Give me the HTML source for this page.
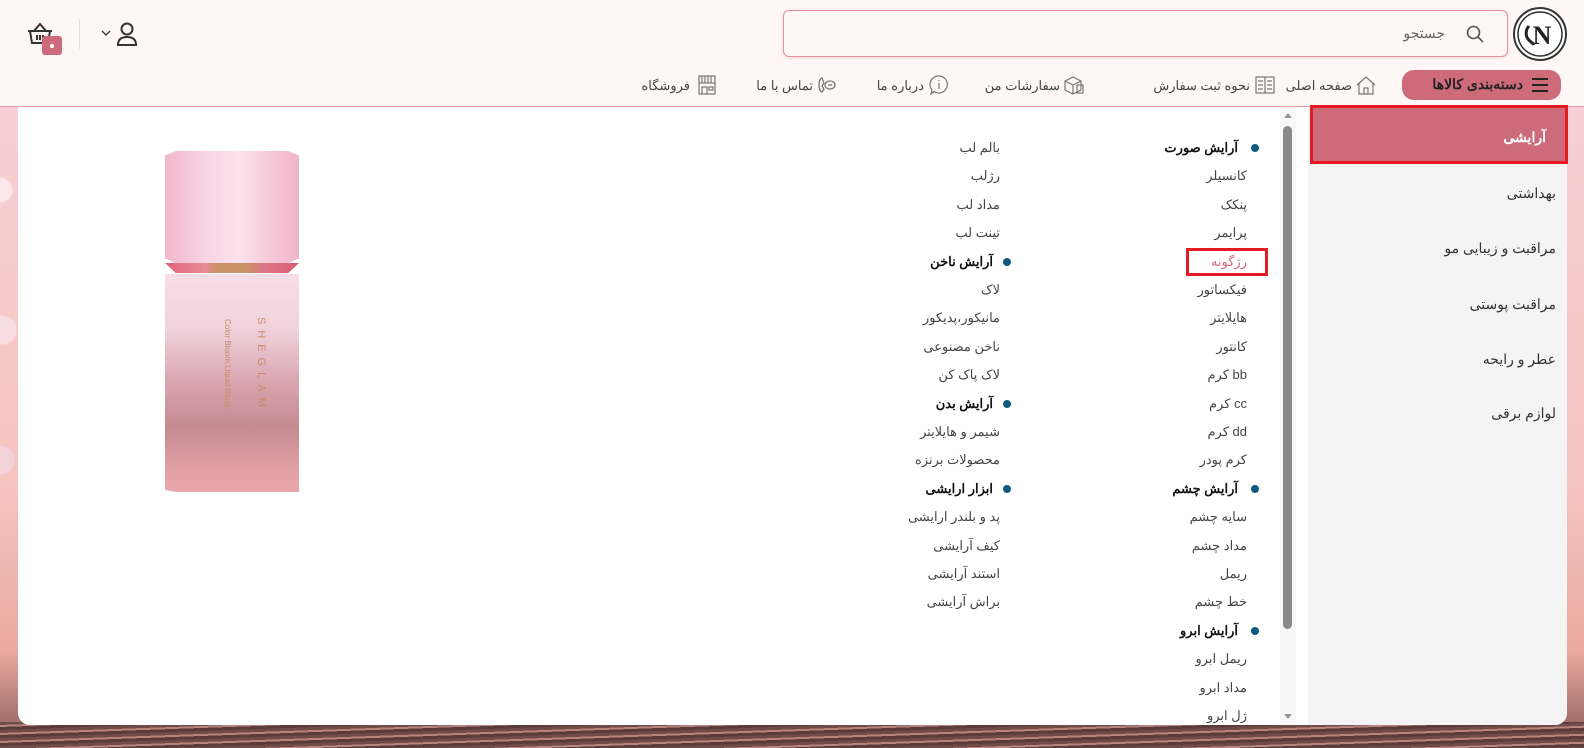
<!DOCTYPE html>
<html lang="fa"><head><meta charset="utf-8">
<style>
*{margin:0;padding:0;box-sizing:border-box}
body{width:1584px;height:748px;overflow:hidden;position:relative;font-family:"Liberation Sans","Noto Sans CJK SC",sans-serif;background:#f3c4c3}
.bg{position:absolute;left:0;top:107px;width:1584px;height:641px;background:linear-gradient(180deg,#f6d0d4 0%,#f5c3c0 60%,#e8a9a0 85%,#8a5a58 100%)}
.sea{position:absolute;left:0;top:722px;width:1584px;height:26px;background:repeating-linear-gradient(178deg,#6f4b49 0 3px,#b9847e 3px 5px,#5a3c3b 5px 8px)}
.header{position:absolute;left:0;top:0;width:1584px;height:107px;background:#fff6f6;border-bottom:1px solid #e39aa2}
.search{position:absolute;left:783px;top:10px;width:725px;height:47px;border:1px solid #e3939d;border-radius:6px;background:#fff6f6;box-shadow:0 1px 3px rgba(220,120,130,.25)}
.search span{position:absolute;right:62px;top:14px;font-size:14px;color:#666}
.catbtn{position:absolute;left:1402px;top:70px;width:159px;height:30px;border-radius:12px;background:#cd6b7a;color:#222;font-size:14px;font-weight:bold}
.nav{position:absolute;top:78px;font-size:13px;color:#444;white-space:nowrap}
.panel{position:absolute;left:18px;top:107px;width:1549px;height:618px;background:#fff;border-radius:0 0 12px 12px;overflow:hidden}
.grey{position:absolute;left:1290px;top:0;width:259px;height:618px;background:#f4f4f4}
.sb{position:absolute;left:1262px;top:0;width:16px;height:618px;background:#f7f7f7}
.thumb{position:absolute;left:3px;top:19px;width:9px;height:503px;background:#8a8a8a;border-radius:5px}
.it{position:absolute;font-size:13px;color:#444;white-space:nowrap;direction:rtl;line-height:16px}
.h{font-weight:bold;color:#111}
.dot{position:absolute;width:8px;height:8px;border-radius:50%;background:#0d5a7c}
.side{position:absolute;font-size:14px;color:#333;direction:rtl;white-space:nowrap}
</style></head><body>
<div class="bg"></div>
<div class="sea"></div>
<div style="position:absolute;left:0;top:130px;width:18px;height:380px;background:radial-gradient(circle at 0 60px,#fbe6ea 0 12px,transparent 13px),radial-gradient(circle at 2px 200px,#f7dde2 0 14px,transparent 15px),radial-gradient(circle at 0 330px,#f3d3d9 0 14px,transparent 15px)"></div>

<div class="header">
  <div class="search"><span>جستجو</span>
    <svg style="position:absolute;right:22px;top:13px" width="20" height="20" viewBox="0 0 20 20" fill="none" stroke="#555" stroke-width="1.6"><circle cx="8.5" cy="8.5" r="6"/><path d="M13 13l5 5"/></svg>
  </div>
  <svg style="position:absolute;left:1512px;top:6px" width="56" height="56" viewBox="0 0 56 56"><circle cx="28" cy="28" r="26" fill="#fff" stroke="#333" stroke-width="2"/><circle cx="28" cy="28" r="22" fill="none" stroke="#333" stroke-width="1.5"/><path d="M17 20c-3 3-4 9-1 13 2 3 5 4 6 6" fill="none" stroke="#222" stroke-width="3"/><text x="30" y="38" font-family="Liberation Serif,serif" font-size="26" font-weight="bold" text-anchor="middle" fill="#222">N</text></svg>
  <svg style="position:absolute;left:26px;top:21px" width="28" height="26" viewBox="0 0 28 26" fill="none" stroke="#333" stroke-width="2"><path d="M8 10L14 3l6 7"/><path d="M2 10h24"/><path d="M4 10l2 12h16l2-12"/><path d="M11 14v5M14 14v5M17 14v5"/></svg>
  <div style="position:absolute;left:42px;top:36px;width:20px;height:19px;background:#cd6b7a;border-radius:3px"><div style="position:absolute;left:8px;top:8px;width:4px;height:4px;border-radius:50%;background:#fff"></div></div>
  <div style="position:absolute;left:79px;top:19px;width:1px;height:30px;background:#e5dede"></div>
  <svg style="position:absolute;left:101px;top:29px" width="10" height="8" viewBox="0 0 10 8" fill="none" stroke="#333" stroke-width="1.3"><path d="M1 2l4 4 4-4"/></svg>
  <svg style="position:absolute;left:116px;top:22px" width="22" height="24" viewBox="0 0 22 24" fill="none" stroke="#333" stroke-width="2"><circle cx="11" cy="7" r="5.5"/><path d="M2 23c0-6 4-8 9-8s9 2 9 8z"/></svg>

  <div class="catbtn"><span style="position:absolute;right:38px;top:6px">دسته‌بندی کالاها</span>
    <svg style="position:absolute;right:12px;top:7px" width="18" height="16" viewBox="0 0 18 16" stroke="#222" stroke-width="2"><path d="M1 2h16M1 8h16M1 14h16"/></svg></div>
  <div class="nav" style="right:232px">صفحه اصلی</div>
  <svg style="position:absolute;left:1355px;top:75px" width="22" height="20" viewBox="0 0 22 20" fill="none" stroke="#777" stroke-width="1.2"><path d="M2 10L11 2l9 8M4 8v11h14V8M9 19v-6h4v6"/></svg>
  <div class="nav" style="right:334px">نحوه ثبت سفارش</div>
  <svg style="position:absolute;left:1255px;top:76px" width="20" height="18" viewBox="0 0 20 18" fill="none" stroke="#777" stroke-width="1.2"><rect x="1" y="1" width="18" height="16"/><path d="M10 1v16M3 5h5M3 9h5M3 13h5M12 5h5M12 9h5M12 13h5"/></svg>
  <div class="nav" style="right:524px">سفارشات من</div>
  <svg style="position:absolute;left:1063px;top:75px" width="22" height="20" viewBox="0 0 22 20" fill="none" stroke="#777" stroke-width="1.2"><path d="M2 6l8-4 8 4v9l-8 4-8-4zM2 6l8 4 8-4M10 10v9"/><rect x="14" y="10" width="6" height="8"/></svg>
  <div class="nav" style="right:660px">درباره ما</div>
  <svg style="position:absolute;left:929px;top:75px" width="20" height="20" viewBox="0 0 20 20" fill="none" stroke="#777" stroke-width="1.2"><path d="M10 1a8.5 8.5 0 1 1-5 15.5L2 19l1-4A8.5 8.5 0 0 1 10 1z"/><path d="M10 8v6M10 5v1"/></svg>
  <div class="nav" style="right:771px">تماس با ما</div>
  <svg style="position:absolute;left:816px;top:76px" width="20" height="18" viewBox="0 0 20 18" fill="none" stroke="#777" stroke-width="1.3"><path d="M6 2C2 3 2 15 6 16l2-3-2-3 2-3z"/><ellipse cx="14" cy="9" rx="5" ry="4"/><path d="M12 9h4"/></svg>
  <div class="nav" style="right:894px">فروشگاه</div>
  <svg style="position:absolute;left:697px;top:75px" width="20" height="20" viewBox="0 0 20 20" fill="none" stroke="#777" stroke-width="1.2"><rect x="2" y="1" width="16" height="7"/><path d="M5 1v7M8 1v7M11 1v7M14 1v7M2 8v11h16V8M5 19v-7h5v7M12 12h4v3h-4z"/></svg>
</div>

<div class="panel">
  <div class="grey"></div>
  <div class="sb"><div style="position:absolute;left:4px;top:6px;border:4px solid transparent;border-bottom:5px solid #999;border-top:0"></div><div class="thumb"></div><div style="position:absolute;left:4px;top:607px;border:4px solid transparent;border-top:5px solid #999;border-bottom:0"></div></div>
  <div style="position:absolute;left:147px;top:44px;width:134px;height:112px;background:linear-gradient(90deg,#f1b6cc 0%,#f7d4e2 30%,#fbe3ec 55%,#f4c2d4 85%,#f0b5c8 100%);clip-path:polygon(8% 0,92% 0,100% 4%,100% 96%,92% 100%,8% 100%,0 96%,0 4%)"></div>
  <div style="position:absolute;left:147px;top:156px;width:134px;height:10px;background:linear-gradient(90deg,#e0647a,#e88a95 30%,#c89266 40%,#c89266 60%,#e07587 75%,#d85c70);clip-path:polygon(0 0,100% 0,92% 100%,8% 100%)"></div>
  <div style="position:absolute;left:147px;top:167px;width:134px;height:218px;background:linear-gradient(180deg,#f7dde6 0%,#efd2dc 25%,#d9a5ae 50%,#c58a92 70%,#e1a1a6 90%,#e8a6ab 100%);clip-path:polygon(0 0,100% 0,100% 100%,92% 100%,8% 100%,0 99%)"></div>
  <div style="position:absolute;left:219px;top:210px;width:30px;height:120px;font-size:11px;color:#c98a67;writing-mode:vertical-rl;letter-spacing:6px">SHEGLAM</div>
  <div style="position:absolute;left:200px;top:212px;width:14px;height:120px;font-size:8px;color:#c98a67;writing-mode:vertical-rl">Color Bloom Liquid Blush</div>

  <!-- col1 -->
  <div class="dot" style="left:1233px;top:37px"></div>
  <div class="it h" style="right:329px;top:33px">آرایش صورت</div>
  <div class="it" style="right:320px;top:61px">کانسیلر</div>
  <div class="it" style="right:320px;top:90px">پنکک</div>
  <div class="it" style="right:320px;top:118px">پرایمر</div>
  <div style="position:absolute;left:1168px;top:141px;width:82px;height:28px;border:3px solid #e31b23"></div>
  <div class="it" style="right:320px;top:147px;color:#d06878">رژگونه</div>
  <div class="it" style="right:320px;top:175px">فیکساتور</div>
  <div class="it" style="right:320px;top:203px">هایلایتر</div>
  <div class="it" style="right:320px;top:232px">کانتور</div>
  <div class="it" style="right:320px;top:260px">bb کرم</div>
  <div class="it" style="right:320px;top:289px">cc کرم</div>
  <div class="it" style="right:320px;top:317px">dd کرم</div>
  <div class="it" style="right:320px;top:345px">کرم پودر</div>
  <div class="dot" style="left:1233px;top:378px"></div>
  <div class="it h" style="right:329px;top:374px">آرایش چشم</div>
  <div class="it" style="right:320px;top:402px">سایه چشم</div>
  <div class="it" style="right:320px;top:431px">مداد چشم</div>
  <div class="it" style="right:320px;top:459px">ریمل</div>
  <div class="it" style="right:320px;top:487px">خط چشم</div>
  <div class="dot" style="left:1233px;top:520px"></div>
  <div class="it h" style="right:329px;top:516px">آرایش ابرو</div>
  <div class="it" style="right:320px;top:544px">ریمل ابرو</div>
  <div class="it" style="right:320px;top:573px">مداد ابرو</div>
  <div class="it" style="right:320px;top:601px">ژل ابرو</div>

  <!-- col2 -->
  <div class="it" style="right:567px;top:33px">بالم لب</div>
  <div class="it" style="right:567px;top:61px">رژلب</div>
  <div class="it" style="right:567px;top:90px">مداد لب</div>
  <div class="it" style="right:567px;top:118px">تینت لب</div>
  <div class="dot" style="left:985px;top:151px"></div>
  <div class="it h" style="right:574px;top:147px">آرایش ناخن</div>
  <div class="it" style="right:567px;top:175px">لاک</div>
  <div class="it" style="right:567px;top:203px">مانیکور،پدیکور</div>
  <div class="it" style="right:567px;top:232px">ناخن مصنوعی</div>
  <div class="it" style="right:567px;top:260px">لاک پاک کن</div>
  <div class="dot" style="left:985px;top:293px"></div>
  <div class="it h" style="right:574px;top:289px">آرایش بدن</div>
  <div class="it" style="right:567px;top:317px">شیمر و هایلایتر</div>
  <div class="it" style="right:567px;top:345px">محصولات برنزه</div>
  <div class="dot" style="left:985px;top:378px"></div>
  <div class="it h" style="right:574px;top:374px">ابزار ارایشی</div>
  <div class="it" style="right:567px;top:402px">پد و بلندر ارایشی</div>
  <div class="it" style="right:567px;top:431px">کیف آرایشی</div>
  <div class="it" style="right:567px;top:459px">استند آرایشی</div>
  <div class="it" style="right:567px;top:487px">براش آرایشی</div>
</div>

<div style="position:absolute;left:1310px;top:105px;width:258px;height:59px;background:#cd6b7a;border:3px solid #e31b23"></div>
<div class="side" style="right:38px;top:129px;color:#fff;font-weight:bold">آرایشی</div>
<div class="side" style="right:28px;top:185px">بهداشتی</div>
<div class="side" style="right:28px;top:240px">مراقبت و زیبایی مو</div>
<div class="side" style="right:28px;top:296px">مراقبت پوستی</div>
<div class="side" style="right:28px;top:351px">عطر و رایحه</div>
<div class="side" style="right:28px;top:405px">لوازم برقی</div>
</body></html>
